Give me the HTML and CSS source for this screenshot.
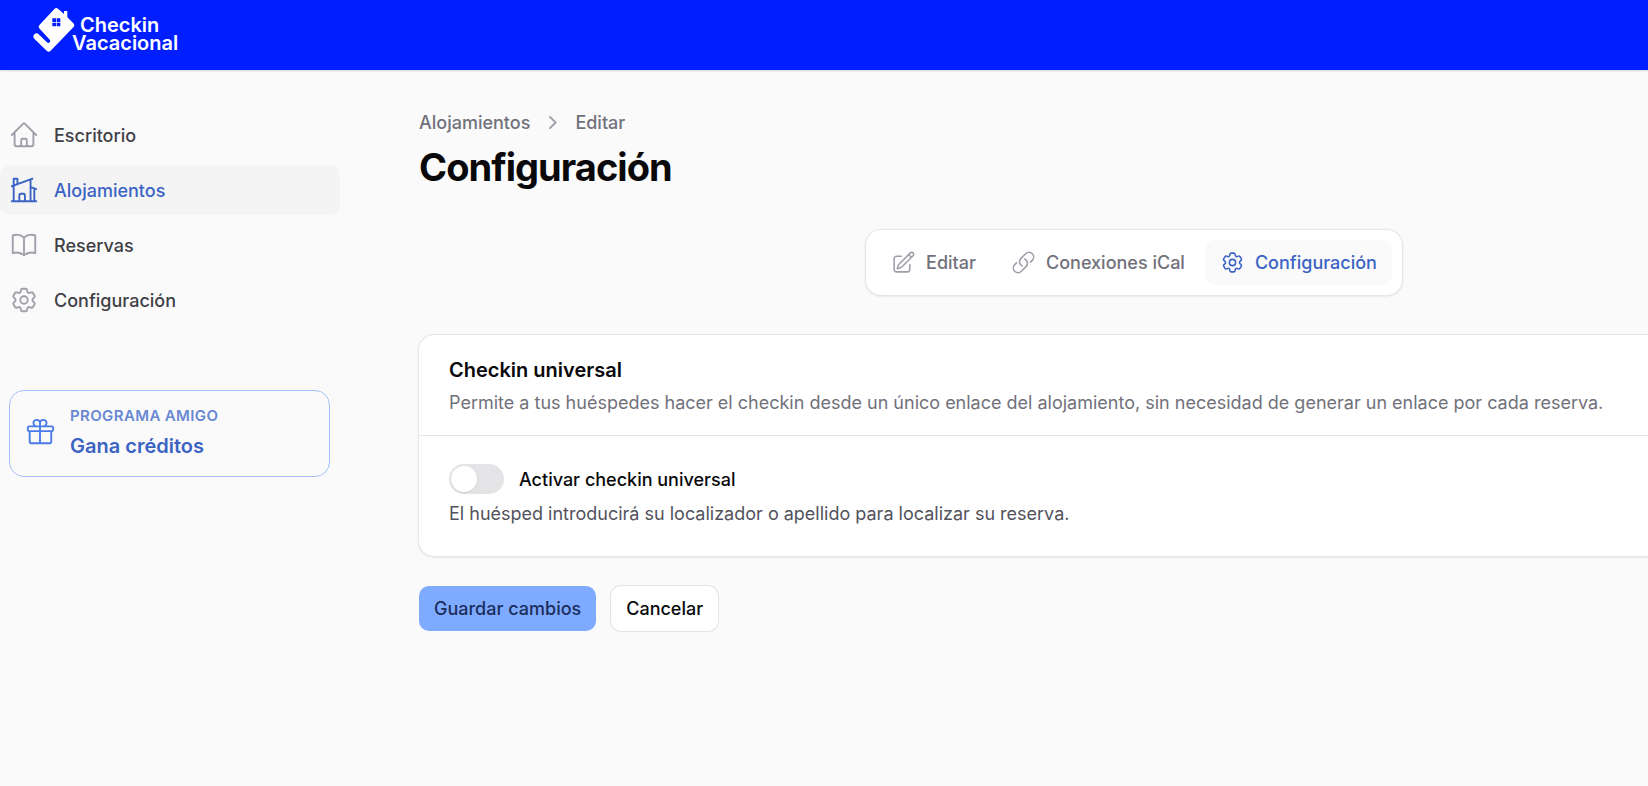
FILE: index.html
```
<!DOCTYPE html>
<html lang="es">
<head>
    <meta charset="utf-8">
    <title>Configuración - Checkin Vacacional</title>
    <meta name="viewport" content="width=device-width, initial-scale=1">
    <link rel="stylesheet" href="styles.css">
</head>
<body>
    <header class="topbar">
        <a href="#" class="logo">
            <svg class="logo-mark" viewBox="0 0 126 132" aria-hidden="true">
                <path fill="#fff" d="M65 2q5-4 10 0l18 16V9h10v19l18 18q6 6 0 12L53 128q-6 6-12 0L4 92q-6-7 0-13q6-6 13 0l24 23q5 5 9 1q4-4-1-9L20 62q-6-6 0-12z"/>
                <path fill="#001eff" d="M58 31h11v11H58zM71 31h11v11H71zM58 44h11v11H58zM71 44h11v11H71z"/>
            </svg>
            <span class="logo-text">
                <span class="logo-top">Checkin</span>
                <span>Vacacional</span>
            </span>
        </a>
    </header>

    <div class="layout">
        <aside class="sidebar">
            <nav class="menu">
                <a href="#" class="menu-item">
                    <svg class="icon" viewBox="0 0 24 24"><path d="m2.25 12 8.954-8.955c.44-.439 1.152-.439 1.591 0L21.75 12M4.5 9.75v10.125c0 .621.504 1.125 1.125 1.125H9.75v-4.875c0-.621.504-1.125 1.125-1.125h2.25c.621 0 1.125.504 1.125 1.125V21h4.125c.621 0 1.125-.504 1.125-1.125V9.75M8.25 21h8.25"/></svg>
                    <span>Escritorio</span>
                </a>
                <a href="#" class="menu-item active">
                    <svg class="icon" viewBox="0 0 24 24"><path d="M8.25 21v-4.875c0-.621.504-1.125 1.125-1.125h2.25c.621 0 1.125.504 1.125 1.125V21m0 0h4.5V3.545M12.75 21h7.5V10.75M2.25 21h1.5m18 0h-18M2.25 9l4.5-1.636M18.75 3l-1.5.545m0 6.205 3 1m1.5.5-1.5-.5M6.75 7.364V3h-3v18m3-13.636 10.5-3.819"/></svg>
                    <span>Alojamientos</span>
                </a>
                <a href="#" class="menu-item">
                    <svg class="icon" viewBox="0 0 24 24"><path d="M12 6.042A8.967 8.967 0 0 0 6 3.75c-1.052 0-2.062.18-3 .512v14.25A8.987 8.987 0 0 1 6 18c2.305 0 4.408.867 6 2.292m0-14.25a8.966 8.966 0 0 1 6-2.292c1.052 0 2.062.18 3 .512v14.25A8.987 8.987 0 0 0 18 18a8.967 8.967 0 0 0-6 2.292m0-14.25v14.25"/></svg>
                    <span>Reservas</span>
                </a>
                <a href="#" class="menu-item">
                    <svg class="icon" viewBox="0 0 24 24"><path id="cog" d="M9.594 3.94c.09-.542.56-.94 1.11-.94h2.593c.55 0 1.02.398 1.11.94l.213 1.281c.063.374.313.686.645.87.074.04.147.083.22.127.325.196.72.257 1.075.124l1.217-.456a1.125 1.125 0 0 1 1.37.49l1.296 2.247a1.125 1.125 0 0 1-.26 1.431l-1.003.827c-.293.241-.438.613-.43.992a7.723 7.723 0 0 1 0 .255c-.008.378.137.75.43.991l1.004.827c.424.35.534.955.26 1.43l-1.298 2.247a1.125 1.125 0 0 1-1.369.491l-1.217-.456c-.355-.133-.75-.072-1.076.124a6.47 6.47 0 0 1-.22.128c-.331.183-.581.495-.644.869l-.213 1.281c-.09.543-.56.94-1.11.94h-2.594c-.55 0-1.019-.398-1.11-.94l-.213-1.281c-.062-.374-.312-.686-.644-.87a6.52 6.52 0 0 1-.22-.127c-.325-.196-.72-.257-1.076-.124l-1.217.456a1.125 1.125 0 0 1-1.369-.49l-1.297-2.247a1.125 1.125 0 0 1 .26-1.431l1.004-.827c.292-.24.437-.613.43-.991a6.932 6.932 0 0 1 0-.255c.007-.38-.138-.751-.43-.992l-1.004-.827a1.125 1.125 0 0 1-.26-1.43l1.297-2.247a1.125 1.125 0 0 1 1.37-.491l1.216.456c.356.133.751.072 1.076-.124.072-.044.146-.086.22-.128.332-.183.582-.495.644-.869l.214-1.28ZM15 12a3 3 0 1 1-6 0 3 3 0 0 1 6 0Z"/></svg>
                    <span>Configuración</span>
                </a>
            </nav>

            <a href="#" class="promo">
                <svg class="icon" viewBox="0 0 24 24"><path d="M21 11.25v8.25a1.5 1.5 0 0 1-1.5 1.5H5.25a1.5 1.5 0 0 1-1.5-1.5v-8.25M12 4.875A2.625 2.625 0 1 0 9.375 7.5H12m0-2.625V7.5m0-2.625A2.625 2.625 0 1 1 14.625 7.5H12m0 0V21m-8.625-9.75h18c.621 0 1.125-.504 1.125-1.125v-1.5c0-.621-.504-1.125-1.125-1.125h-18c-.621 0-1.125.504-1.125 1.125v1.5c0 .621.504 1.125 1.125 1.125Z"/></svg>
                <span class="promo-text">
                    <span class="promo-label">PROGRAMA AMIGO</span>
                    <span class="promo-title">Gana créditos</span>
                </span>
            </a>
        </aside>

        <main class="content">
            <nav class="breadcrumbs">
                <a href="#">Alojamientos</a>
                <svg class="chevron" viewBox="0 0 20 20"><path d="m8 5.500 4.500 4.500L8 14.500"/></svg>
                <a href="#">Editar</a>
            </nav>
            <h1>Configuración</h1>

            <nav class="tabs">
                <a href="#" class="tab">
                    <svg class="icon" viewBox="0 0 24 24"><path d="m16.862 4.487 1.687-1.688a1.875 1.875 0 1 1 2.652 2.652L10.582 16.07a4.5 4.5 0 0 1-1.897 1.13L6 18l.8-2.685a4.5 4.5 0 0 1 1.13-1.897l8.932-8.931Zm0 0L19.5 7.125M18 14v4.75A2.25 2.25 0 0 1 15.75 21H5.25A2.25 2.25 0 0 1 3 18.75V8.25A2.25 2.25 0 0 1 5.25 6H10"/></svg>
                    <span>Editar</span>
                </a>
                <a href="#" class="tab">
                    <svg class="icon" viewBox="0 0 24 24"><path d="M13.19 8.688a4.5 4.5 0 0 1 1.242 7.244l-4.5 4.5a4.5 4.5 0 0 1-6.364-6.364l1.757-1.757m13.35-.622 1.757-1.757a4.5 4.5 0 0 0-6.364-6.364l-4.5 4.5a4.5 4.5 0 0 0 1.242 7.244"/></svg>
                    <span>Conexiones iCal</span>
                </a>
                <a href="#" class="tab active">
                    <svg class="icon" viewBox="0 0 24 24"><use href="#cog"/></svg>
                    <span>Configuración</span>
                </a>
            </nav>

            <form>
                <section class="card">
                    <div class="card-header">
                        <h2>Checkin universal</h2>
                        <p>Permite a tus huéspedes hacer el checkin desde un único enlace del alojamiento, sin necesidad de generar un enlace por cada reserva.</p>
                    </div>
                    <div class="card-body">
                        <label class="field">
                            <input type="checkbox" class="toggle" role="switch">
                            <span>Activar checkin universal</span>
                        </label>
                        <p>El huésped introducirá su localizador o apellido para localizar su reserva.</p>
                    </div>
                </section>

                <div class="actions">
                    <button type="submit" class="btn btn-primary">Guardar cambios</button>
                    <button type="button" class="btn btn-secondary">Cancelar</button>
                </div>
            </form>
        </main>
    </div>
</body>
</html>
```
FILE: styles.css
```
* {
    box-sizing: border-box;
    margin: 0;
    padding: 0;
}

body {
    font-family: Inter, "Liberation Sans", sans-serif;
    font-size: 18px;
    line-height: 25px;
    color: #09090b;
    background: #fafafa;
}

a {
    color: inherit;
    text-decoration: none;
}

/* top bar */
.topbar {
    height: 70px;
    padding: 8px 33px;
    background: #001eff;
    box-shadow: 0 1px 2px rgba(0, 0, 0, 0.15);
}

.logo {
    display: inline-flex;
    color: #fff;
}

.logo-mark {
    width: 42px;
    height: 44px;
}

.logo-text {
    display: flex;
    flex-direction: column;
    margin-left: -3px;
    padding-top: 8px;
    font-size: 20px;
    font-weight: 600;
    line-height: 18px;
}

.logo-top {
    padding-left: 8px;
}

.layout {
    display: flex;
    min-height: calc(100vh - 70px);
    overflow: hidden;
}

/* sidebar */
.sidebar {
    width: 340px;
    flex-shrink: 0;
    padding-top: 40px;
}

.menu {
    display: flex;
    flex-direction: column;
    gap: 5px;
}

.menu-item {
    display: flex;
    align-items: center;
    gap: 15px;
    height: 50px;
    padding: 0 9px;
    border-radius: 10px;
    font-weight: 500;
    color: #3f3f46;
}

.menu-item.active {
    color: #3b63c4;
    background: #f4f4f5;
}

.icon {
    width: 30px;
    height: 30px;
    flex-shrink: 0;
    fill: none;
    stroke: #9f9fa9;
    stroke-width: 1.5;
    stroke-linecap: round;
    stroke-linejoin: round;
}

.active .icon {
    stroke: #3b63c4;
}

.promo {
    display: flex;
    align-items: center;
    gap: 15px;
    margin: 65px 10px 0 9px;
    padding: 10px 15px 13px;
    height: 87px;
    border: 1px solid #a3bffa;
    border-radius: 15px;
}

.promo .icon {
    stroke: #4a7be8;
}

.promo-text {
    display: flex;
    flex-direction: column;
    gap: 3px;
}

.promo-label {
    font-size: 15px;
    font-weight: 600;
    letter-spacing: 0.025em;
    color: #6888d2;
}

.promo-title {
    font-size: 20px;
    font-weight: 600;
    line-height: 30px;
    color: #3b63c4;
}

/* the content keeps going past the right edge of the window */
.content {
    flex: 1;
    min-width: 0;
    margin: 40px -201px 0 79px;
}

.breadcrumbs {
    display: flex;
    align-items: center;
    gap: 10px;
    font-weight: 500;
    color: #71717b;
}

.chevron {
    width: 25px;
    height: 25px;
    fill: none;
    stroke: #9f9fa9;
    stroke-width: 1.5;
    stroke-linecap: round;
    stroke-linejoin: round;
}

h1 {
    margin-top: 10px;
    font-size: 38px;
    font-weight: 700;
    line-height: 45px;
    letter-spacing: -0.025em;
}

.tabs {
    display: flex;
    gap: 5px;
    width: fit-content;
    margin: 40px auto;
    padding: 10px;
    background: #fff;
    border-radius: 15px;
    box-shadow: 0 0 0 1px #e6e6e7, 0 1px 3px rgba(0, 0, 0, 0.15);
}

.tab {
    display: flex;
    align-items: center;
    gap: 10px;
    padding: 10px 15px;
    border-radius: 10px;
    font-weight: 500;
    color: #71717b;
}

.tab .icon {
    width: 25px;
    height: 25px;
}

.tab.active {
    color: #3b63c4;
    background: #fafafa;
}

/* card */
.card {
    background: #fff;
    border-radius: 15px;
    box-shadow: 0 0 0 1px #e6e6e7, 0 1px 3px rgba(0, 0, 0, 0.15);
}

.card-header {
    padding: 20px 30px;
    border-bottom: 1px solid #e4e4e7;
    color: #71717b;
}

.card-header h2 {
    margin-bottom: 5px;
    font-size: 20px;
    font-weight: 600;
    line-height: 30px;
    color: #09090b;
}

.card-body {
    padding: 28px 30px 30px;
    color: #52525c;
}

.field {
    display: flex;
    align-items: center;
    gap: 15px;
    width: fit-content;
    margin-bottom: 7px;
    font-weight: 500;
    color: #09090b;
}

.toggle {
    appearance: none;
    width: 55px;
    height: 30px;
    padding: 2px;
    border-radius: 15px;
    background: #e4e4e7;
    cursor: pointer;
}

.toggle::before {
    content: "";
    display: block;
    width: 26px;
    height: 26px;
    border-radius: 50%;
    background: #fff;
    box-shadow: 0 1px 2px rgba(0, 0, 0, 0.1);
}

.toggle:checked {
    background: #3b63c4;
}

.toggle:checked::before {
    margin-left: 25px;
}

.actions {
    display: flex;
    gap: 15px;
    margin-top: 30px;
}

.btn {
    height: 45px;
    padding: 0 15px;
    border: none;
    border-radius: 10px;
    font: inherit;
    font-weight: 500;
    cursor: pointer;
}

.btn-primary {
    color: #1c2d5c;
    background: #7eabff;
}

.btn-secondary {
    color: #09090b;
    background: #fff;
    box-shadow: 0 0 0 1px #e4e4e7;
}
```
